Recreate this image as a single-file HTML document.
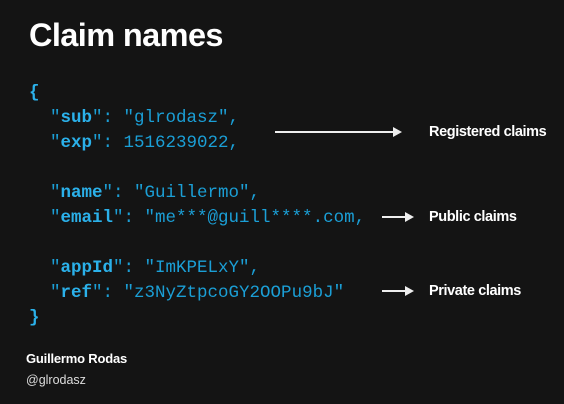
<!DOCTYPE html>
<html><head><style>
html,body{margin:0;padding:0;background:#141414;width:564px;height:404px;overflow:hidden;position:relative}
.t{position:absolute;left:29px;top:17px;font:bold 32.5px "Liberation Sans",sans-serif;color:#fff;letter-spacing:-0.6px}
.c{position:absolute;left:29px;font:17.5px/25px "Liberation Mono",monospace;color:#1b9fd6;white-space:pre}
.c b{color:#2bb1ea}
.l{position:absolute;font:bold 14.5px "Liberation Sans",sans-serif;color:#fff;letter-spacing:-0.4px}
.a{position:absolute;height:2px;background:#eee}
.a:after{content:"";position:absolute;right:-2px;top:-4px;border-left:9px solid #eee;border-top:5px solid transparent;border-bottom:5px solid transparent}
.f{position:absolute;left:26px;font:12.5px "Liberation Sans",sans-serif;color:#ddd}
</style></head><body>
<div class="t">Claim names</div>
<div class="c" style="top:81px"><b>{</b>
  "<b>sub</b>": "glrodasz",
  "<b>exp</b>": 1516239022,

  "<b>name</b>": "Guillermo",
  "<b>email</b>": "me***@guill****.com,

  "<b>appId</b>": "ImKPELxY",
  "<b>ref</b>": "z3NyZtpcoGY2OOPu9bJ"
<b>}</b></div>
<div class="a" style="left:275px;top:131px;width:125px"></div>
<div class="l" style="left:429px;top:124px">Registered claims</div>
<div class="a" style="left:382px;top:216px;width:30px"></div>
<div class="l" style="left:429px;top:209px">Public claims</div>
<div class="a" style="left:382px;top:290px;width:30px"></div>
<div class="l" style="left:429px;top:283px">Private claims</div>
<div class="f" style="top:351px;font-weight:bold;font-size:13px;color:#fff;letter-spacing:-0.2px">Guillermo Rodas</div>
<div class="f" style="top:373px">@glrodasz</div>
</body></html>
